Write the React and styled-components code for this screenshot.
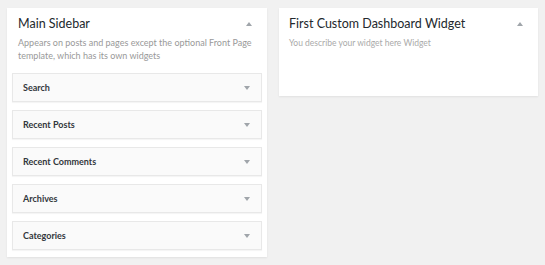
import styled, { createGlobalStyle } from 'styled-components';

const GlobalStyle = createGlobalStyle`
    body {
        margin: 0;
        background: #f1f1f1;
        font-family: Lato, "Open Sans", "Liberation Sans", sans-serif;
    }
`

const Page = styled.div`
    display: flex;
    align-items: flex-start;
    gap: 12px;
    padding: 8px 7px;
`

const Panel = styled.div`
    width: ${props => props.width}px;
    min-height: ${props => props.minHeight || 0}px;
    box-sizing: border-box;
    background: #fff;
    box-shadow: 0 1px 2px rgba(0, 0, 0, 0.07);
    padding: ${props => props.pad};
`

const PanelHead = styled.div`
    display: flex;
    justify-content: space-between;
    align-items: center;
    padding: 0 ${props => props.right}px 0 ${props => props.left}px;
`

const Title = styled.h3`
    margin: 0;
    font-size: 12.5px;
    font-weight: 400;
    color: #23282d;
    line-height: 20px;
`

const Desc = styled.p`
    margin: ${props => props.margin};
    font-size: ${props => props.size}px;
    line-height: 12.5px;
    color: ${props => props.color};
`

const Arrow = styled.span`
    width: 0;
    height: 0;
    border-left: 3px solid transparent;
    border-right: 3px solid transparent;
    ${props => props.up
        ? 'border-bottom: 4px solid #a0a5aa;'
        : 'border-top: 4px solid #a0a5aa;'}
`

const WidgetList = styled.div`
    display: flex;
    flex-direction: column;
    gap: 8px;
    margin-top: 11px;
`

const WidgetRow = styled.div`
    display: flex;
    justify-content: space-between;
    align-items: center;
    height: 27px;
    padding: 0 11px 0 10px;
    background: #fafafa;
    border: 1px solid #e8e8e8;
    box-shadow: 0 1px 1px rgba(0, 0, 0, 0.04);
`

const WidgetName = styled.span`
    font-size: 9px;
    font-weight: 700;
    color: #32373c;
`

const widgets = ['Search', 'Recent Posts', 'Recent Comments', 'Archives', 'Categories'];

function App() {
    return (
        <>
            <GlobalStyle />
            <Page>
                <Panel width={260} pad="6px 5px 7px">
                    <PanelHead left={6} right={10}>
                        <Title>Main Sidebar</Title>
                        <Arrow up />
                    </PanelHead>
                    <Desc size={9} color="#999" margin="3px 6px 0">
                        Appears on posts and pages except the optional Front Page template, which has its own widgets
                    </Desc>
                    <WidgetList>
                        {widgets.map(name => (
                            <WidgetRow key={name}>
                                <WidgetName>{name}</WidgetName>
                                <Arrow />
                            </WidgetRow>
                        ))}
                    </WidgetList>
                </Panel>
                <Panel width={259} minHeight={88} pad="6px 0 0">
                    <PanelHead left={10} right={15}>
                        <Title>First Custom Dashboard Widget</Title>
                        <Arrow up />
                    </PanelHead>
                    <Desc size={8.5} color="#aaa" margin="3px 10px 0">
                        You describe your widget here Widget
                    </Desc>
                </Panel>
            </Page>
        </>
    );
}

export default App;
